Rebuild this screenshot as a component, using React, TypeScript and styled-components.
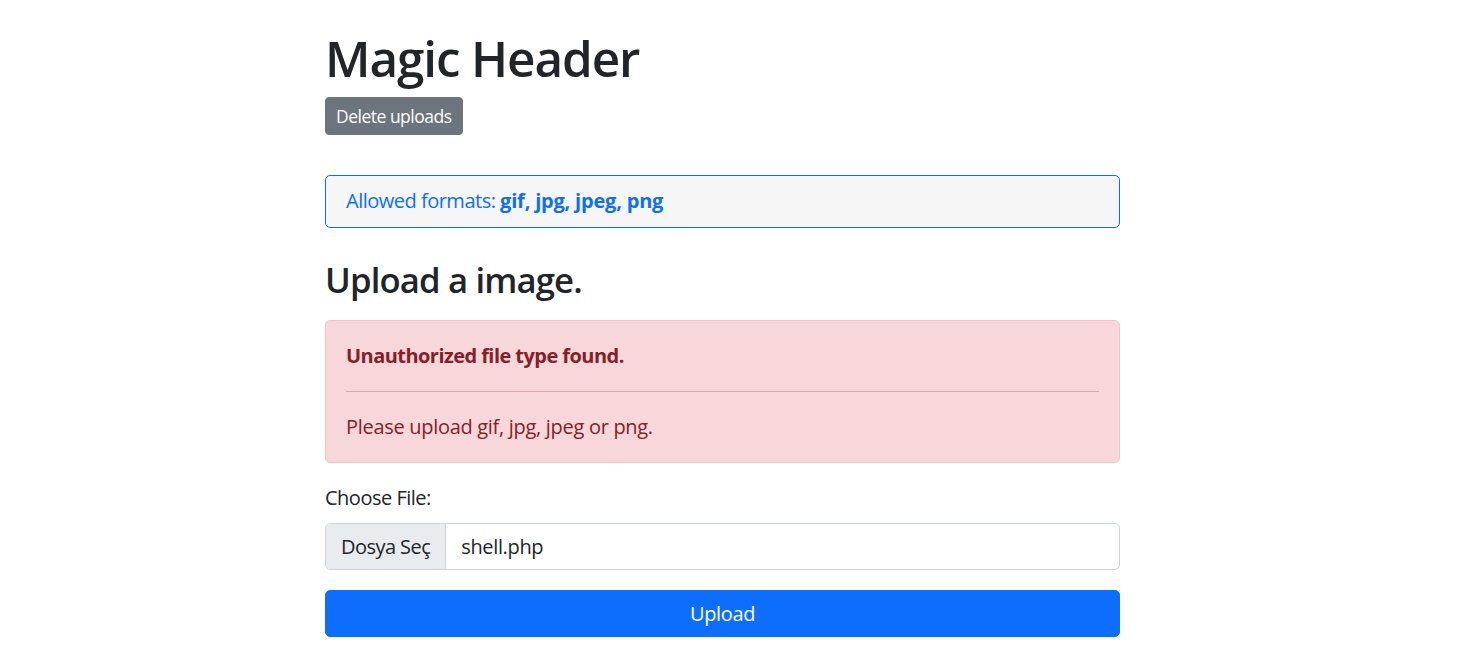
import React from "react";
import styled, { createGlobalStyle } from "styled-components";

const Global = createGlobalStyle`
  html, body { margin: 0; padding: 0; background: #fff; }
  body {
    font-family: "Segoe UI", "Open Sans", "Noto Sans", sans-serif;
    font-size: 20px;
    line-height: 30px;
    letter-spacing: -0.35px;
    color: #212529;
  }
  * { box-sizing: border-box; }
`;

const Page = styled.div`
  padding: 28px 12px 0 0;
`;

const Container = styled.main`
  width: 795px;
  margin: 0 auto;
  display: flex;
  flex-direction: column;
`;

const Title = styled.h1`
  margin: 0 0 10px;
  font-size: 49.4px;
  line-height: 59px;
  font-weight: 600;
  letter-spacing: -1.1px;
`;

const SmallButton = styled.button`
  align-self: flex-start;
  font-family: inherit;
  font-size: 17.5px;
  line-height: 26px;
  letter-spacing: -0.5px;
  padding: 5px 10px;
  height: 38px;
  border: 1px solid #6c757d;
  border-radius: 4px;
  background: #6c757d;
  color: #fff;
`;

const FormatBox = styled.div`
  margin-top: 40px;
  padding: 10px 20px 11px;
  border: 1px solid #0d6efd;
  border-radius: 5px;
  background: #f6f6f6;
  color: #0d6efd;
  letter-spacing: -0.5px;
`;

const Strong = styled.b`
  font-weight: 700;
  letter-spacing: -0.2px;
`;

const SubTitle = styled.h3`
  margin: 31px 0 19px;
  font-size: 34.7px;
  line-height: 42px;
  font-weight: 600;
  letter-spacing: -0.85px;
`;

const Alert = styled.div`
  padding: 20px;
  border: 1px solid #f5c2c7;
  border-radius: 5px;
  background: #f8d7da;
  color: #842029;
`;

const AlertLine = styled.p<{ $bold?: boolean }>`
  margin: 0;
  font-weight: ${(p) => (p.$bold ? 700 : 400)};
  letter-spacing: ${(p) => (p.$bold ? "-0.55px" : "-0.3px")};
`;

const Rule = styled.hr`
  margin: 20px 0;
  border: 0;
  height: 1px;
  background: #dba9ae;
`;

const Label = styled.label`
  margin: 20px 0 10px;
  letter-spacing: -0.5px;
`;

const FileField = styled.div`
  display: flex;
  height: 47px;
  border: 1px solid #ced4da;
  border-radius: 5px;
  background: #fff;
  overflow: hidden;
`;

const FileButton = styled.span`
  display: flex;
  align-items: center;
  padding: 0 15px;
  background: #e9ecef;
  border-right: 1px solid #ced4da;
  color: #212529;
  letter-spacing: -0.55px;
`;

const FileName = styled.span`
  display: flex;
  align-items: center;
  padding: 0 15px;
`;

const PrimaryButton = styled.button`
  margin-top: 20px;
  height: 47px;
  width: 100%;
  font-family: inherit;
  font-size: 20px;
  line-height: 30px;
  letter-spacing: -0.35px;
  border: 1px solid #0d6efd;
  border-radius: 5px;
  background: #0d6efd;
  color: #fff;
`;

export default function App() {
  return (
    <Page>
      <Global />
      <Container>
        <Title>Magic Header</Title>
        <SmallButton>Delete uploads</SmallButton>
        <FormatBox>
          Allowed formats: <Strong>gif, jpg, jpeg, png</Strong>
        </FormatBox>
        <SubTitle>Upload a image.</SubTitle>
        <Alert>
          <AlertLine $bold>Unauthorized file type found.</AlertLine>
          <Rule />
          <AlertLine>Please upload gif, jpg, jpeg or png.</AlertLine>
        </Alert>
        <Label>Choose File:</Label>
        <FileField>
          <FileButton>Dosya Seç</FileButton>
          <FileName>shell.php</FileName>
        </FileField>
        <PrimaryButton>Upload</PrimaryButton>
      </Container>
    </Page>
  );
}
